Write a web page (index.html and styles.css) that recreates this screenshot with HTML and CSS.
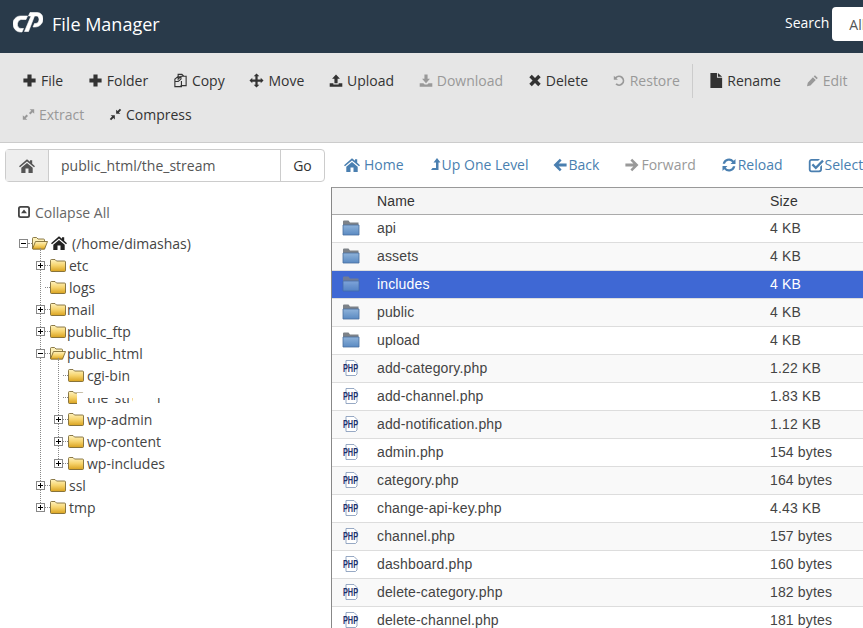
FILE: index.html
```html
<!DOCTYPE html>
<html lang="en">
<head>
    <meta charset="UTF-8">
    <meta name="viewport" content="width=device-width, initial-scale=1.0">
    <title>File Manager</title>
    <link rel="stylesheet" href="styles.css">
</head>
<body>
    <svg class="defs" aria-hidden="true">
        <defs>
            <linearGradient id="yellow" x1="0" y1="0" x2="0" y2="1">
                <stop offset="0" stop-color="#fff3c0"/>
                <stop offset="0.5" stop-color="#f6d36c"/>
                <stop offset="1" stop-color="#d9a21f"/>
            </linearGradient>
            <linearGradient id="blue" x1="0" y1="0" x2="0" y2="1">
                <stop offset="0" stop-color="#8fb3da"/>
                <stop offset="1" stop-color="#5a8ac2"/>
            </linearGradient>
            <symbol id="i-plus" viewBox="0 0 16 16"><path d="M5.800 1.500h4.400v4.300h4.300v4.400h-4.300v4.300H5.800v-4.300H1.500V5.800h4.300z"/></symbol>
            <symbol id="i-copy" viewBox="0 0 16 16"><path fill="none" stroke="currentColor" stroke-width="1.200" d="M5.500 5.500V1.500h4l2 2h-3l-3 3v-1zM8.500 3.500h5.500v10H8M2 6.500l3-2.500h3.500v2.500l-3 2.500H2zM2 6.500v8h7v-6"/></symbol>
            <symbol id="i-move" viewBox="0 0 16 16"><path d="M8 .5l3 3H9.200v3.300h3.300V5l3 3-3 3V9.200H9.200v3.300H11l-3 3-3-3h1.800V9.200H3.500V11l-3-3 3-3v1.800h3.300V3.500H5z"/></symbol>
            <symbol id="i-upload" viewBox="0 0 16 16"><path d="M8 1l4.500 5H9.800v5H6.200V6H3.500zM.8 11.200h4.200v1.500h6v-1.500h4.200V15H.8z"/></symbol>
            <symbol id="i-download" viewBox="0 0 16 16"><path d="M6.200 1h3.600v5h2.700L8 11 3.500 6h2.700zM.8 11.200h4.200l1.500 1.500h3l1.500-1.500h4.200V15H.8z"/></symbol>
            <symbol id="i-delete" viewBox="0 0 16 16"><path d="M4.300 1.500L8 5.200l3.700-3.700 2.800 2.800L10.800 8l3.700 3.700-2.800 2.800L8 10.800l-3.700 3.700-2.800-2.800L5.200 8 1.500 4.300z"/></symbol>
            <symbol id="i-restore" viewBox="0 0 16 16"><path d="M1 2l1.700 1.700A6.500 6.500 0 1 1 3 13l1.500-1.600A4.300 4.300 0 1 0 4.300 5.300L6 7H1z"/></symbol>
            <symbol id="i-file" viewBox="0 0 13 16"><path d="M0 0h7v5h5.500v11H0zM8 0l4.500 4H8z"/></symbol>
            <symbol id="i-edit" viewBox="0 0 16 16"><path d="M11 1.500l3.500 3.500-1.500 1.500L9.500 3zM8.500 4l3.500 3.500L5.500 14 1.200 15l1-4.300z"/></symbol>
            <symbol id="i-expand" viewBox="0 0 16 16"><path d="M9.500 1.500h5.500V7l-1.900-1.900-2.800 2.800-1.700-1.700 2.800-2.800zM6.500 14.500H1V9l1.900 1.900 2.800-2.800 1.700 1.700-2.800 2.800z"/></symbol>
            <symbol id="i-compress" viewBox="0 0 16 16"><path d="M15 2.600L12.200 5.400 14 7.200H8.800V2l1.800 1.800 2.800-2.800zM1 13.400l2.800-2.800L2 8.800h5.200V14l-1.800-1.800L2.600 15z"/></symbol>
            <symbol id="i-home" viewBox="0 0 16 16"><path d="M8 1.200l3 2.600V2.200h2.200v3.500l2.800 2.500-1 1.100L8 3.500 1 9.300 0 8.200zM8 5l5.700 4.700V15H9.500v-4.500h-3V15H2.300V9.700z"/></symbol>
            <symbol id="i-up" viewBox="0 0 12 16"><path d="M8 1l3.500 4.500H9.500V13H2L3.500 11H7V5.500H4.500z"/></symbol>
            <symbol id="i-back" viewBox="0 0 16 16"><path d="M7.800 1.800l1.800 1.800-3 3h8v2.800h-8l3 3-1.800 1.800L1.500 8z"/></symbol>
            <symbol id="i-forward" viewBox="0 0 16 16"><path d="M8.200 1.800L6.400 3.600l3 3h-8v2.800h8l-3 3 1.800 1.800L14.500 8z"/></symbol>
            <symbol id="i-reload" viewBox="0 0 16 16"><path d="M14.500 2v5h-5l1.800-1.800A4.200 4.200 0 0 0 4 6.800H1.700A6.400 6.400 0 0 1 12.800 3.700zM1.500 14V9h5l-1.800 1.800A4.200 4.200 0 0 0 12 9.200h2.300A6.400 6.400 0 0 1 3.200 12.300z"/></symbol>
            <symbol id="i-check" viewBox="0 0 16 16"><path d="M3.500 2h8.500l-1.800 1.800H3.500a.9.9 0 0 0-.9.900v7.800c0 .5.400.9.900.9h7.800c.5 0 .9-.4.900-.9V9.800l1.800-1.800v4.500c0 1.500-1.200 2.700-2.700 2.700H3.500c-1.500 0-2.700-1.200-2.700-2.700V4.700C.8 3.200 2 2 3.500 2zM14.200 2.800L15.800 4.400 7.800 12.400 3.600 8.200l1.600-1.600 2.600 2.600z"/></symbol>
            <symbol id="i-collapse" viewBox="0 0 14 14"><path fill-rule="evenodd" d="M3.500 1h7A2.500 2.500 0 0 1 13 3.500v7a2.500 2.500 0 0 1-2.500 2.500h-7A2.500 2.500 0 0 1 1 10.500v-7A2.500 2.500 0 0 1 3.500 1zM3.800 2.800a1 1 0 0 0-1 1v6.400a1 1 0 0 0 1 1h6.400a1 1 0 0 0 1-1V3.800a1 1 0 0 0-1-1zM7 4.500l3 3.800H4z"/></symbol>
            <symbol id="i-closed" viewBox="0 0 16 14"><path d="M.5 12.500v-10q0-1 1-1h3.500l1.500 1.500h8q1 0 1 1v8.500q0 1-1 1h-13q-1 0-1-1z" fill="url(#yellow)" stroke="#6e5a25" stroke-width=".8"/></symbol>
            <symbol id="i-open" viewBox="0 0 16 14"><path d="M.5 12.500v-10q0-1 1-1h3l1.500 1.500h5.500q1 0 1 1v1.500" fill="#fdf0b8" stroke="#6e5a25" stroke-width=".8"/><path d="M.5 12.800l3-7.300h12l-3 7.700H1z" fill="url(#yellow)" stroke="#6e5a25" stroke-width=".8"/></symbol>
            <symbol id="i-blue" viewBox="0 0 18 16"><path d="M1 14V1.500q0-1 1-1h4.500l1.500 2H16.500V14z" fill="#7d8288"/><path d="M1 5h16v10H1z" fill="url(#blue)" stroke="#4a6f9f" stroke-width=".8"/></symbol>
            <symbol id="i-php" viewBox="0 0 16 16"><path d="M3 .5h8l3 3v10.500l-1.500 1.500H3z" fill="#fff" stroke="#7c93b5" stroke-width=".8"/><text x="0" y="12" textLength="15" lengthAdjust="spacingAndGlyphs" class="php-label">PHP</text></symbol>
        </defs>
    </svg>

    <header class="top-bar">
        <div class="brand">
            <svg class="logo" viewBox="0 0 30 21"><path fill="#fff" stroke="#fff" stroke-width=".6" d="M14.500 4H7.500C3 4 0 8 0 11.500 0 16 3 20 7.500 20H9l1.500-3.500H8c-2.500 0-4-2.500-3.500-5C5 9 6.500 7.500 8.500 7.500H13zM17 .5h7c4 0 6 3 6 6.500 0 4-3 8-8 8h-2l1.500-3.500h1c2.500 0 3.500-2 3.500-4s-1-3.500-2.500-3.500h-2l-6 15.500h-4L18 4h-2.500z"/></svg>
            <span class="brand-name">File Manager</span>
        </div>
        <div class="search">
            <span class="search-label">Search</span>
            <span class="search-box">All Your Files</span>
        </div>
    </header>

    <nav class="toolbar">
        <a class="tool"><svg class="ic"><use href="#i-plus"/></svg>File</a>
        <a class="tool"><svg class="ic"><use href="#i-plus"/></svg>Folder</a>
        <a class="tool"><svg class="ic"><use href="#i-copy"/></svg>Copy</a>
        <a class="tool"><svg class="ic"><use href="#i-move"/></svg>Move</a>
        <a class="tool mid"><svg class="ic"><use href="#i-upload"/></svg>Upload</a>
        <a class="tool mid off"><svg class="ic"><use href="#i-download"/></svg>Download</a>
        <a class="tool mid"><svg class="ic"><use href="#i-delete"/></svg>Delete</a>
        <a class="tool narrow off"><svg class="ic"><use href="#i-restore"/></svg>Restore</a>
        <span class="tool-sep"></span>
        <a class="tool narrow"><svg class="ic"><use href="#i-file"/></svg>Rename</a>
        <a class="tool narrow off"><svg class="ic"><use href="#i-edit"/></svg>Edit</a>
        <a class="tool narrow off"><svg class="ic"><use href="#i-expand"/></svg>Extract</a>
        <a class="tool narrow"><svg class="ic"><use href="#i-compress"/></svg>Compress</a>
    </nav>

    <div class="location">
        <div class="path-group">
            <span class="path-home"><svg class="ic"><use href="#i-home"/></svg></span>
            <span class="path-input">public_html/the_stream</span>
            <span class="path-go">Go</span>
        </div>
        <div class="links">
            <a class="link home"><svg class="ic"><use href="#i-home"/></svg>Home</a>
            <a class="link up"><svg class="ic"><use href="#i-up"/></svg>Up One Level</a>
            <a class="link"><svg class="ic"><use href="#i-back"/></svg>Back</a>
            <a class="link off"><svg class="ic"><use href="#i-forward"/></svg>Forward</a>
            <a class="link"><svg class="ic"><use href="#i-reload"/></svg>Reload</a>
            <a class="link"><svg class="ic"><use href="#i-check"/></svg>Select All</a>
        </div>
    </div>

    <main class="panes">
        <aside class="tree-pane">
            <div class="collapse-all"><svg class="ic-collapse"><use href="#i-collapse"/></svg>Collapse All</div>
            <div class="node root">
                <span class="toggle minus"></span><span class="tick"></span>
                <svg class="folder"><use href="#i-open"/></svg>
                <svg class="ic root-home"><use href="#i-home"/></svg>
                <span class="root-name">(/home/dimashas)</span>
            </div>
            <div class="branch">
                <div class="node"><span class="toggle plus"></span><span class="tick"></span><svg class="folder"><use href="#i-closed"/></svg><span class="label wide">etc</span></div>
                <div class="node"><span class="toggle none"></span><span class="tick"></span><svg class="folder"><use href="#i-closed"/></svg><span class="label wide">logs</span></div>
                <div class="node"><span class="toggle plus"></span><span class="tick"></span><svg class="folder"><use href="#i-closed"/></svg><span class="label">mail</span></div>
                <div class="node"><span class="toggle plus"></span><span class="tick"></span><svg class="folder"><use href="#i-closed"/></svg><span class="label">public_ftp</span></div>
                <div class="node"><span class="toggle minus"></span><span class="tick"></span><svg class="folder"><use href="#i-open"/></svg><span class="label">public_html</span></div>
                <div class="branch">
                    <div class="node"><span class="toggle none"></span><span class="tick"></span><svg class="folder"><use href="#i-closed"/></svg><span class="label wide">cgi-bin</span></div>
                    <div class="node"><span class="toggle none"></span><span class="tick"></span><svg class="folder"><use href="#i-closed"/></svg><span class="label wide">the_stream</span><span class="smudge"></span></div>
                    <div class="node"><span class="toggle plus"></span><span class="tick"></span><svg class="folder"><use href="#i-closed"/></svg><span class="label wide">wp-admin</span></div>
                    <div class="node"><span class="toggle plus"></span><span class="tick"></span><svg class="folder"><use href="#i-closed"/></svg><span class="label wide">wp-content</span></div>
                    <div class="node"><span class="toggle plus"></span><span class="tick"></span><svg class="folder"><use href="#i-closed"/></svg><span class="label wide">wp-includes</span></div>
                </div>
                <div class="node"><span class="toggle plus"></span><span class="tick"></span><svg class="folder"><use href="#i-closed"/></svg><span class="label wide">ssl</span></div>
                <div class="node"><span class="toggle plus"></span><span class="tick"></span><svg class="folder"><use href="#i-closed"/></svg><span class="label wide">tmp</span></div>
            </div>
        </aside>

        <section class="files">
            <table class="file-table">
                <colgroup><col class="col-icon"><col class="col-name"><col class="col-size"></colgroup>
                <thead>
                    <tr><th></th><th>Name</th><th>Size</th></tr>
                </thead>
                <tbody>
                    <tr><td><svg class="type"><use href="#i-blue"/></svg></td><td>api</td><td>4 KB</td></tr>
                    <tr><td><svg class="type"><use href="#i-blue"/></svg></td><td>assets</td><td>4 KB</td></tr>
                    <tr class="selected"><td><svg class="type"><use href="#i-blue"/></svg></td><td>includes</td><td>4 KB</td></tr>
                    <tr><td><svg class="type"><use href="#i-blue"/></svg></td><td>public</td><td>4 KB</td></tr>
                    <tr><td><svg class="type"><use href="#i-blue"/></svg></td><td>upload</td><td>4 KB</td></tr>
                    <tr><td><svg class="type"><use href="#i-php"/></svg></td><td>add-category.php</td><td>1.22 KB</td></tr>
                    <tr><td><svg class="type"><use href="#i-php"/></svg></td><td>add-channel.php</td><td>1.83 KB</td></tr>
                    <tr><td><svg class="type"><use href="#i-php"/></svg></td><td>add-notification.php</td><td>1.12 KB</td></tr>
                    <tr><td><svg class="type"><use href="#i-php"/></svg></td><td>admin.php</td><td>154 bytes</td></tr>
                    <tr><td><svg class="type"><use href="#i-php"/></svg></td><td>category.php</td><td>164 bytes</td></tr>
                    <tr><td><svg class="type"><use href="#i-php"/></svg></td><td>change-api-key.php</td><td>4.43 KB</td></tr>
                    <tr><td><svg class="type"><use href="#i-php"/></svg></td><td>channel.php</td><td>157 bytes</td></tr>
                    <tr><td><svg class="type"><use href="#i-php"/></svg></td><td>dashboard.php</td><td>160 bytes</td></tr>
                    <tr><td><svg class="type"><use href="#i-php"/></svg></td><td>delete-category.php</td><td>182 bytes</td></tr>
                    <tr><td><svg class="type"><use href="#i-php"/></svg></td><td>delete-channel.php</td><td>181 bytes</td></tr>
                </tbody>
            </table>
        </section>
    </main>
</body>
</html>
```

FILE: styles.css
```css
html, body {
    height: 100%;
}
body {
    margin: 0;
    overflow: hidden;
    display: flex;
    flex-direction: column;
    background-color: #fff;
    color: #333;
    font-family: "Open Sans", sans-serif;
    font-size: 14px;
}
.defs {
    display: block;
    width: 0;
    height: 0;
}
.ic {
    width: 15px;
    height: 15px;
    fill: currentColor;
    flex: none;
}

/* top bar */
.top-bar {
    flex: none;
    height: 53px;
    display: flex;
    justify-content: space-between;
    background-color: #293a4a;
    color: #fff;
}
.brand {
    display: flex;
    align-items: center;
    padding-left: 13px;
}
.logo {
    width: 30px;
    height: 21px;
    margin-right: 9px;
    margin-top: -8px;
}
.brand-name {
    font-size: 18px;
    margin-top: -5px;
}
.search {
    display: flex;
    align-items: center;
    width: 78px;
    overflow: hidden;
    white-space: nowrap;
    flex: none;
    margin-top: -5px;
}
.search-label {
    margin-right: 3px;
    margin-top: -3px;
}
.search-box {
    display: block;
    box-sizing: border-box;
    height: 34px;
    padding: 8px 17px;
    background-color: #fff;
    border-radius: 4px;
    color: #555;
}

/* toolbar */
.toolbar {
    flex: none;
    box-sizing: border-box;
    height: 90px;
    padding: 11px 0 0 22px;
    display: flex;
    flex-wrap: wrap;
    align-content: flex-start;
    column-gap: 24.7px;
    background-color: #e6e6e6;
    border-bottom: 1px solid #ccc;
}
.tool {
    display: flex;
    align-items: center;
    gap: 4px;
    height: 34px;
    margin-top: -1px;
    color: #333;
}
.tool.mid .ic {
    width: 14px;
}
.tool.narrow .ic {
    width: 13px;
}
.tool.off {
    color: #999;
}
.tool-sep {
    width: 1px;
    height: 34px;
    background-color: #ccc;
    margin: 0 -7px 0 -13px;
}

/* path and navigation row */
.location {
    flex: none;
    height: 44px;
    box-sizing: border-box;
    padding: 6px 0 0 5px;
    display: flex;
    white-space: nowrap;
}
.path-group {
    flex: none;
    box-sizing: border-box;
    width: 320px;
    height: 33px;
    display: flex;
    border: 1px solid #ccc;
    border-radius: 4px;
    color: #555;
}
.path-home {
    width: 42px;
    display: flex;
    align-items: center;
    justify-content: center;
    background-color: #eee;
    border-right: 1px solid #ccc;
}
.path-home .ic {
    width: 16px;
    height: 16px;
}
.path-input {
    flex: 1;
    padding: 6px 12px;
}
.path-go {
    width: 43px;
    text-align: center;
    padding-top: 6px;
    border-left: 1px solid #ccc;
    color: #333;
}
.links {
    display: flex;
    align-items: center;
    height: 31px;
    padding-left: 19px;
    gap: 25px;
}
.link {
    display: flex;
    align-items: center;
    gap: 1px;
    color: #4a7fb0;
}
.link .ic {
    width: 16px;
    height: 16px;
}
.link.home {
    gap: 4px;
}
.link.up {
    margin-right: -2px;
}
.link.up .ic {
    width: 12px;
}
.link.off {
    color: #999;
}

/* folder tree */
.panes {
    flex: 1;
    display: flex;
    min-height: 0;
}
.tree-pane {
    flex: none;
    box-sizing: border-box;
    width: 331px;
    padding: 15px 0 0 18px;
    color: #444;
}
.collapse-all {
    display: flex;
    align-items: center;
    gap: 4px;
    height: 22px;
    margin-bottom: 9px;
    margin-top: -1px;
    color: #666;
}
.ic-collapse {
    width: 14px;
    height: 14px;
    margin-left: -1px;
    fill: #444;
}
.node {
    position: relative;
    display: flex;
    align-items: center;
    height: 22px;
    white-space: nowrap;
}
.toggle {
    flex: none;
    box-sizing: border-box;
    width: 9px;
    height: 9px;
    border: 1px solid #888;
    background-color: #fff;
    position: relative;
    z-index: 1;
}
.toggle.none {
    border-color: transparent;
    background: none;
}
.toggle.plus::before,
.toggle.minus::before {
    content: "";
    position: absolute;
    left: 1px;
    top: 3px;
    width: 5px;
    height: 1px;
    background-color: #000;
}
.toggle.plus::after {
    content: "";
    position: absolute;
    left: 3px;
    top: 1px;
    width: 1px;
    height: 5px;
    background-color: #000;
}
.tick {
    flex: none;
    width: 5px;
    border-top: 1px dotted #888;
}
.folder {
    flex: none;
    width: 16px;
    height: 14px;
}
.root {
    margin-left: 1px;
}
.root .tick {
    width: 4px;
}
.root-home {
    width: 16px;
    height: 16px;
    margin-left: 3px;
    color: #222;
}
.root-name {
    margin-left: 5px;
}
.label {
    margin-left: 1px;
}
.label.wide {
    margin-left: 3px;
}
.branch {
    position: relative;
    margin-left: 18px;
}
.branch::before {
    content: "";
    position: absolute;
    left: 4px;
    top: -6px;
    bottom: 11px;
    border-left: 1px dotted #888;
}
/* the blurred-out folder name */
.smudge {
    position: absolute;
    left: 23px;
    top: 0;
    width: 100px;
    height: 22px;
    background:
        linear-gradient(#fff, #fff) 0 7px / 10px 15px no-repeat,
        linear-gradient(#fff, #fff) 10px 0 / 90px 12px no-repeat,
        linear-gradient(#fff, #fff) 56px 0 / 22px 22px no-repeat,
        linear-gradient(#fff, #fff) 0 18px / 100px 4px no-repeat;
}

/* file table */
.files {
    flex: 1;
    min-width: 0;
    overflow: hidden;
    border-left: 1px solid #888;
    border-top: 1px solid #999;
}
.file-table {
    width: 531px;
    table-layout: fixed;
    border-collapse: collapse;
    font-family: "Liberation Sans", Arial, sans-serif;
    font-size: 14px;
    letter-spacing: 0.15px;
    color: #444;
}
.col-icon {
    width: 35px;
}
.col-name {
    width: 393px;
}
.file-table th {
    height: 26px;
    padding: 0 0 0 10px;
    box-sizing: border-box;
    text-align: left;
    font-weight: normal;
    color: #333;
    background-color: #f5f5f5;
    border-bottom: 1px solid #aaa;
}
.file-table td {
    height: 27px;
    padding: 0 0 0 10px;
    border-bottom: 1px solid #ddd;
    white-space: nowrap;
}
.file-table td:first-child {
    line-height: 0;
}
.file-table tbody tr:nth-child(even) {
    background-color: #f9f9f9;
}
.file-table tr.selected {
    background-color: #3f68d4;
    color: #fff;
}
.selected .type {
    opacity: 0.8;
}
.type {
    width: 18px;
    height: 16px;
}
.php-label {
    font-family: "Liberation Sans", Arial, sans-serif;
    font-size: 10.5px;
    font-weight: bold;
    fill: #1c2f6b;
    letter-spacing: 0;
}
```
